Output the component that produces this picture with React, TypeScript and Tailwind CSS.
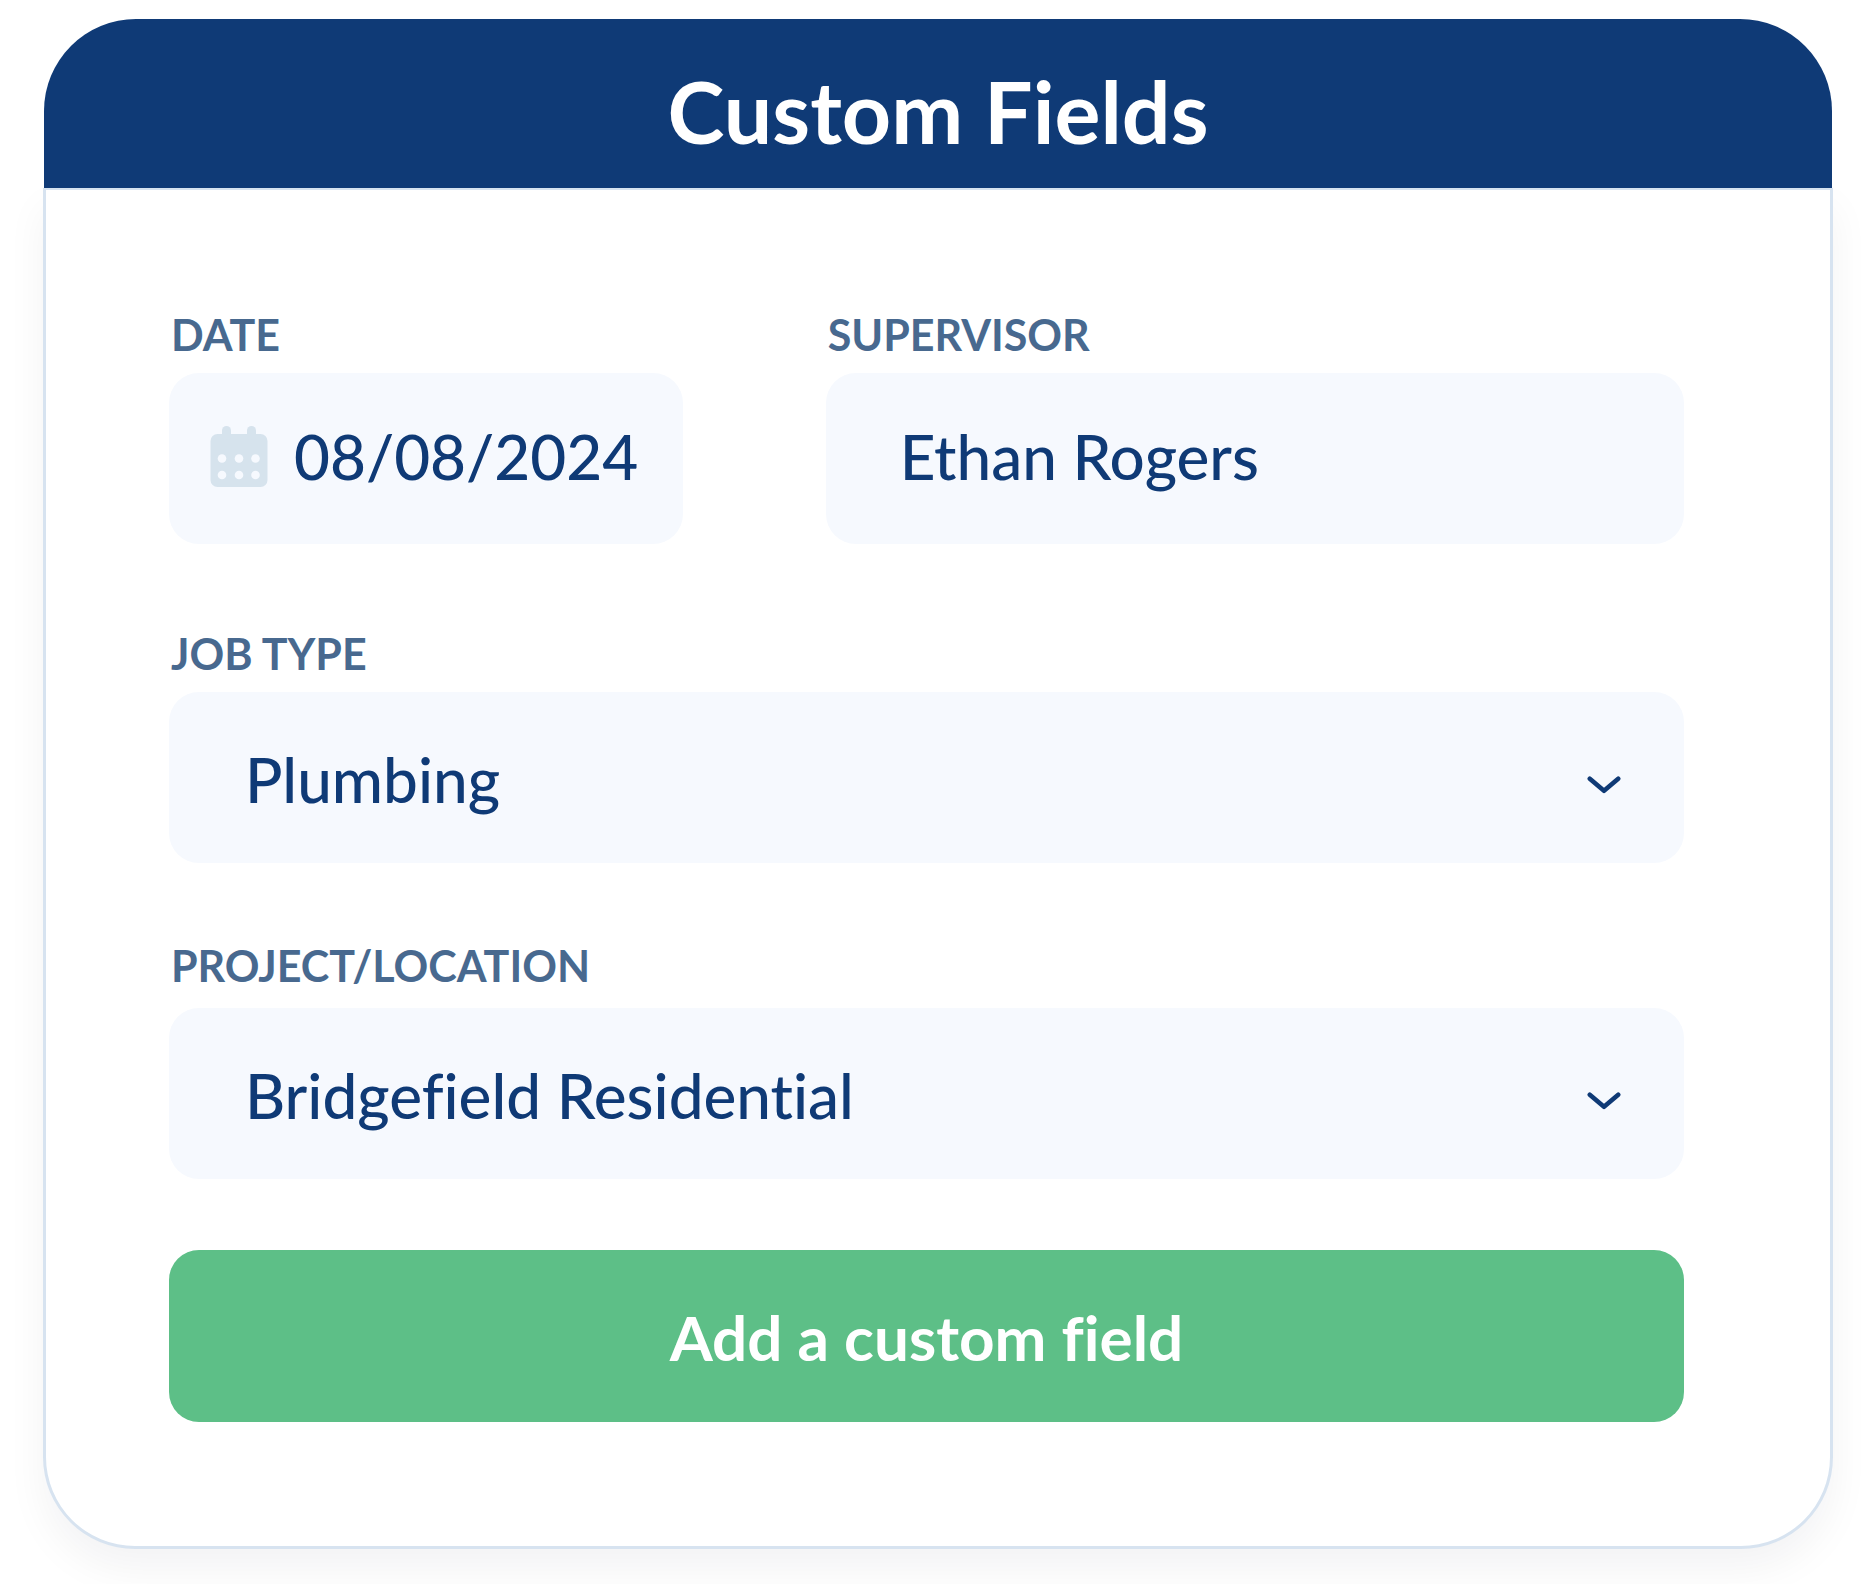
import React, { useState } from "react";

const JOB_TYPES = ["Plumbing", "Electrical", "Carpentry"];
const PROJECTS = ["Bridgefield Residential", "Oakwood Commercial"];

const CalendarIcon = () => (
  <svg viewBox="0 0 58 62" className="h-[62px] w-[58px] shrink-0" aria-hidden="true">
    <g fill="#d6e3ed">
      <rect x="0.5" y="8" width="57" height="53" rx="7" />
      <rect x="12" y="0" width="9" height="14" rx="4.5" />
      <rect x="37" y="0" width="9" height="14" rx="4.5" />
    </g>
    <g fill="#f6f9fe">
      {[12, 29, 45.5].map((cx) => (
        <React.Fragment key={cx}>
          <circle cx={cx} cy="32.5" r="4.3" />
          <circle cx={cx} cy="49" r="4.3" />
        </React.Fragment>
      ))}
    </g>
  </svg>
);

const ChevronIcon = () => (
  <svg
    viewBox="0 0 34 18"
    className="pointer-events-none absolute top-[84px] right-[63px] h-[18px] w-[34px]"
    fill="none"
    stroke="#0f3a76"
    strokeWidth="4.6"
    strokeLinecap="round"
    strokeLinejoin="round"
    aria-hidden="true"
  >
    <path d="M2.8 2.8 17 14.8 31.2 2.8" />
  </svg>
);

const labelClass = "block px-0.5 text-[43px] leading-12 font-bold text-[#48698f] uppercase";

type SelectFieldProps = {
  id: string;
  value: string;
  options: string[];
  onChange: (value: string) => void;
};

const SelectField = ({ id, value, options, onChange }: SelectFieldProps) => (
  <div className="relative">
    <select
      id={id}
      value={value}
      onChange={(e) => onChange(e.target.value)}
      className="block h-[171px] w-full appearance-none rounded-[30px] bg-[#f6f9fe] pt-1 pr-32 pl-[76px] text-[62px] font-medium text-[#0f3a76] outline-none"
    >
      {options.map((option) => (
        <option key={option}>{option}</option>
      ))}
    </select>
    <ChevronIcon />
  </div>
);

const App = () => {
  const [date, setDate] = useState("08/08/2024");
  const [supervisor, setSupervisor] = useState("Ethan Rogers");
  const [jobType, setJobType] = useState(JOB_TYPES[0]);
  const [project, setProject] = useState(PROJECTS[0]);

  return (
    <main className="bg-white px-[43px] pt-[19px] pb-[35px] font-['Lato',sans-serif] [font-variant-ligatures:none]">
      <header className="relative z-10 mx-px flex h-[169px] items-center justify-center rounded-t-[92px] bg-[#0f3a76] pt-3.5">
        <h1 className="text-[86px] leading-none font-bold text-white">Custom Fields</h1>
      </header>

      <form
        onSubmit={(e) => e.preventDefault()}
        className="rounded-b-[92px] border-x-3 border-t-2 border-b-3 border-[#d7e3f0] bg-white pt-[121px] pr-[146px] pb-[124px] pl-[123px] shadow-[0_20px_40px_rgba(20,20,40,0.05)]"
      >
        <div className="grid grid-cols-[514fr_859fr] gap-x-[143px]">
          <div>
            <label htmlFor="date" className={labelClass}>
              Date
            </label>
            <div className="mt-3.5 flex h-[171px] items-center gap-[26px] rounded-[30px] bg-[#f6f9fe] pr-5 pb-1 pl-[41px]">
              <CalendarIcon />
              <input
                id="date"
                type="text"
                value={date}
                onChange={(e) => setDate(e.target.value)}
                className="w-full min-w-0 bg-transparent text-[62px] font-medium text-[#0f3a76] outline-none"
              />
            </div>
          </div>
          <div>
            <label htmlFor="supervisor" className={labelClass}>
              Supervisor
            </label>
            <input
              id="supervisor"
              type="text"
              value={supervisor}
              onChange={(e) => setSupervisor(e.target.value)}
              className="mt-3.5 block h-[171px] w-full rounded-[30px] bg-[#f6f9fe] px-[74px] pb-1.5 text-[62px] font-medium text-[#0f3a76] outline-none"
            />
          </div>
        </div>

        <div className="mt-[86px]">
          <label htmlFor="job-type" className={`${labelClass} mb-3.5`}>
            Job Type
          </label>
          <SelectField id="job-type" value={jobType} options={JOB_TYPES} onChange={setJobType} />
        </div>

        <div className="mt-[79px]">
          <label htmlFor="project" className={`${labelClass} mb-[18px]`}>
            Project/Location
          </label>
          <SelectField id="project" value={project} options={PROJECTS} onChange={setProject} />
        </div>

        <button
          type="submit"
          className="mt-[71px] block h-[172px] w-full rounded-[30px] bg-[#5dbf87] pt-0.5 text-[62px] font-bold text-white"
        >
          Add a custom field
        </button>
      </form>
    </main>
  );
};

export default App;
